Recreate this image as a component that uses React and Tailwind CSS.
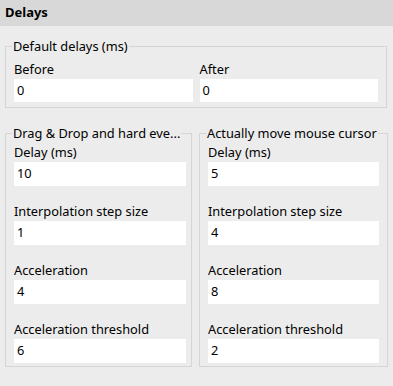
// Delays settings panel
const leftFields = [
  { label: 'Delay (ms)', value: '10' },
  { label: 'Interpolation step size', value: '1' },
  { label: 'Acceleration', value: '4' },
  { label: 'Acceleration threshold', value: '6' },
];

const rightFields = [
  { label: 'Delay (ms)', value: '5' },
  { label: 'Interpolation step size', value: '4' },
  { label: 'Acceleration', value: '8' },
  { label: 'Acceleration threshold', value: '2' },
];

function Field({ label, value, inputClass = 'h-[24px]' }) {
  return (
    <div className="flex flex-col">
      <div className="h-[16px] leading-[16px] mb-[2px] whitespace-nowrap">{label}</div>
      <div className={`${inputClass} bg-white flex items-center px-[3px]`}>{value}</div>
    </div>
  );
}

function Group({ title, fields, className }) {
  return (
    <fieldset className={`border border-[#d5d5d5] min-w-0 pl-[8px] pb-[3px] ${className}`}>
      <legend className="ml-[-2px] px-[1px] leading-[16px] whitespace-nowrap">{title}</legend>
      <div className="flex flex-col gap-[17px] mt-[3px]">
        {fields.map(f => (
          <Field key={f.label} label={f.label} value={f.value} />
        ))}
      </div>
    </fieldset>
  );
}

export default function App() {
  return (
    <div
      className="w-[393px] h-[386px] bg-[#ececec] text-[12.8px] text-black overflow-hidden"
      style={{ fontFamily: '"Noto Sans", "Open Sans", sans-serif' }}
    >
      <div className="h-[26px] bg-[#d8d8d8] flex items-center pl-[5px] font-bold text-[13px]">
        Delays
      </div>

      <fieldset className="mt-[12px] ml-[5px] mr-[6px] border border-[#d5d5d5] px-[8px] pb-[5px] min-w-0">
        <legend className="ml-[-2px] px-[1px] leading-[16px]">Default delays (ms)</legend>
        <div className="grid grid-cols-2 gap-[7px] mt-[7px]">
          <Field label="Before" value="0" inputClass="h-[23px]" />
          <Field label="After" value="0" inputClass="h-[23px]" />
        </div>
      </fieldset>

      <div className="flex gap-[7px] ml-[5px] mr-[5px] mt-[17px]">
        <Group title="Drag & Drop and hard eve..." fields={leftFields} className="w-[187px] pr-[5px]" />
        <Group title="Actually move mouse cursor" fields={rightFields} className="flex-1 pr-[8px]" />
      </div>
    </div>
  );
}
